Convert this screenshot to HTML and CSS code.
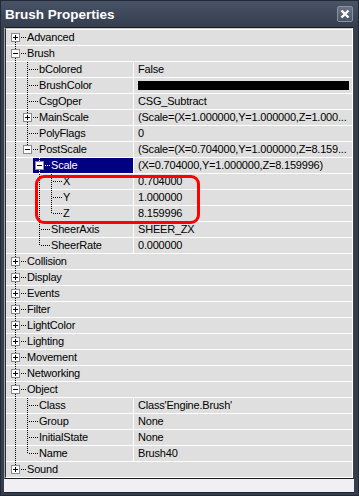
FILE: index.html
```html
<!DOCTYPE html>
<html lang="en">
<head>
    <meta charset="UTF-8">
    <title>Brush Properties</title>
    <link rel="stylesheet" href="styles.css">
</head>
<body>

<div class="window">
    <div class="titlebar">
        <span class="title">Brush Properties</span>
        <span class="close">
            <svg width="10" height="10" viewBox="0 0 10 10"><path d="M1.5 1.5L8.5 8.5M8.5 1.5L1.5 8.5" stroke="#fff" stroke-width="2.4"/></svg>
        </span>
    </div>

    <div class="client">
        <div class="grid">
            <div class="grid-in">

                <div class="row cat">
                    <div class="name"><span class="node"><span class="slot first"><i class="box plus"></i></span><span class="stub"></span><span class="label">Advanced</span></span></div>
                </div>
                <div class="row cat">
                    <div class="name"><span class="node"><span class="slot tee"><i class="box"></i></span><span class="stub"></span><span class="label">Brush</span></span></div>
                </div>
                <div class="row">
                    <div class="name"><span class="slot pipe"></span><span class="node"><span class="slot tee"></span><span class="stub"></span><span class="label">bColored</span></span></div>
                    <div class="value">False</div>
                </div>
                <div class="row">
                    <div class="name"><span class="slot pipe"></span><span class="node"><span class="slot tee"></span><span class="stub"></span><span class="label">BrushColor</span></span></div>
                    <div class="value"><span class="swatch"></span></div>
                </div>
                <div class="row">
                    <div class="name"><span class="slot pipe"></span><span class="node"><span class="slot tee"></span><span class="stub"></span><span class="label">CsgOper</span></span></div>
                    <div class="value">CSG_Subtract</div>
                </div>
                <div class="row">
                    <div class="name"><span class="slot pipe"></span><span class="node"><span class="slot tee"><i class="box plus"></i></span><span class="stub"></span><span class="label">MainScale</span></span></div>
                    <div class="value">(Scale=(X=1.000000,Y=1.000000,Z=1.000...</div>
                </div>
                <div class="row">
                    <div class="name"><span class="slot pipe"></span><span class="node"><span class="slot tee"></span><span class="stub"></span><span class="label">PolyFlags</span></span></div>
                    <div class="value">0</div>
                </div>
                <div class="row">
                    <div class="name"><span class="slot pipe"></span><span class="node"><span class="slot elbow"><i class="box"></i></span><span class="stub"></span><span class="label">PostScale</span></span></div>
                    <div class="value">(Scale=(X=0.704000,Y=1.000000,Z=8.159...</div>
                </div>
                <div class="row sel">
                    <div class="name"><span class="slot pipe"></span><span class="slot"></span><span class="node"><span class="slot tee"><i class="box"></i></span><span class="stub"></span><span class="label">Scale</span></span></div>
                    <div class="value">(X=0.704000,Y=1.000000,Z=8.159996)</div>
                </div>
                <div class="row">
                    <div class="name"><span class="slot pipe"></span><span class="slot"></span><span class="slot pipe"></span><span class="node"><span class="slot tee"></span><span class="stub"></span><span class="label">X</span></span></div>
                    <div class="value">0.704000</div>
                </div>
                <div class="row">
                    <div class="name"><span class="slot pipe"></span><span class="slot"></span><span class="slot pipe"></span><span class="node"><span class="slot tee"></span><span class="stub"></span><span class="label">Y</span></span></div>
                    <div class="value">1.000000</div>
                </div>
                <div class="row">
                    <div class="name"><span class="slot pipe"></span><span class="slot"></span><span class="slot pipe"></span><span class="node"><span class="slot elbow"></span><span class="stub"></span><span class="label">Z</span></span></div>
                    <div class="value">8.159996</div>
                </div>
                <div class="row">
                    <div class="name"><span class="slot pipe"></span><span class="slot"></span><span class="node"><span class="slot tee"></span><span class="stub"></span><span class="label">SheerAxis</span></span></div>
                    <div class="value">SHEER_ZX</div>
                </div>
                <div class="row">
                    <div class="name"><span class="slot pipe"></span><span class="slot"></span><span class="node"><span class="slot elbow"></span><span class="stub"></span><span class="label">SheerRate</span></span></div>
                    <div class="value">0.000000</div>
                </div>
                <div class="row cat">
                    <div class="name"><span class="node"><span class="slot tee"><i class="box plus"></i></span><span class="stub"></span><span class="label">Collision</span></span></div>
                </div>
                <div class="row cat">
                    <div class="name"><span class="node"><span class="slot tee"><i class="box plus"></i></span><span class="stub"></span><span class="label">Display</span></span></div>
                </div>
                <div class="row cat">
                    <div class="name"><span class="node"><span class="slot tee"><i class="box plus"></i></span><span class="stub"></span><span class="label">Events</span></span></div>
                </div>
                <div class="row cat">
                    <div class="name"><span class="node"><span class="slot tee"><i class="box plus"></i></span><span class="stub"></span><span class="label">Filter</span></span></div>
                </div>
                <div class="row cat">
                    <div class="name"><span class="node"><span class="slot tee"><i class="box plus"></i></span><span class="stub"></span><span class="label">LightColor</span></span></div>
                </div>
                <div class="row cat">
                    <div class="name"><span class="node"><span class="slot tee"><i class="box plus"></i></span><span class="stub"></span><span class="label">Lighting</span></span></div>
                </div>
                <div class="row cat">
                    <div class="name"><span class="node"><span class="slot tee"><i class="box plus"></i></span><span class="stub"></span><span class="label">Movement</span></span></div>
                </div>
                <div class="row cat">
                    <div class="name"><span class="node"><span class="slot tee"><i class="box plus"></i></span><span class="stub"></span><span class="label">Networking</span></span></div>
                </div>
                <div class="row cat">
                    <div class="name"><span class="node"><span class="slot tee"><i class="box"></i></span><span class="stub"></span><span class="label">Object</span></span></div>
                </div>
                <div class="row">
                    <div class="name"><span class="slot pipe"></span><span class="node"><span class="slot tee"></span><span class="stub"></span><span class="label">Class</span></span></div>
                    <div class="value">Class'Engine.Brush'</div>
                </div>
                <div class="row">
                    <div class="name"><span class="slot pipe"></span><span class="node"><span class="slot tee"></span><span class="stub"></span><span class="label">Group</span></span></div>
                    <div class="value">None</div>
                </div>
                <div class="row">
                    <div class="name"><span class="slot pipe"></span><span class="node"><span class="slot tee"></span><span class="stub"></span><span class="label">InitialState</span></span></div>
                    <div class="value">None</div>
                </div>
                <div class="row">
                    <div class="name"><span class="slot pipe"></span><span class="node"><span class="slot elbow"></span><span class="stub"></span><span class="label">Name</span></span></div>
                    <div class="value">Brush40</div>
                </div>
                <div class="row cat">
                    <div class="name"><span class="node"><span class="slot elbow"><i class="box plus"></i></span><span class="stub"></span><span class="label">Sound</span></span></div>
                </div>

            </div>
        </div>
    </div>

    <!-- red annotation round X/Y/Z -->
    <div class="mark"></div>
</div>

</body>
</html>
```

FILE: styles.css
```css
body {
    margin: 0;
    width: 359px;
    height: 496px;
    overflow: hidden;
    background: #343e4f;
    font-family: 'Liberation Sans', Arial, sans-serif;
    font-size: 11px;
    color: #000;
}
.window {
    position: relative;
    height: 496px;
    box-sizing: border-box;
    border: 1px solid #222935;
    background: linear-gradient(#485365, #343e4f 26px, #343e4f);
    display: flex;
    flex-direction: column;
}
.titlebar {
    height: 26px;
    flex: none;
    display: flex;
    align-items: center;
    justify-content: space-between;
    padding: 0 5px 0 4px;
}
.title {
    color: #fff;
    font-weight: bold;
    font-size: 13.5px;
    padding-top: 1px;
}
.close {
    width: 14px;
    height: 14px;
    border: 1px solid #8a93a2;
    border-radius: 2px;
    background: linear-gradient(#6c7586, #4b5464);
    display: flex;
    align-items: center;
    justify-content: center;
}
.client {
    flex: 1;
    margin: 0 4px 2px 3px;
    background: #f0f0f4;
    border-bottom: 1px solid #1f2631;
}
.grid {
    border-top: 1px solid #1c1c1c;
    border-left: 1px solid #a0a0a0;
    border-right: 1px solid #404040;
    border-bottom: 1px solid #1c1c1c;
}
.grid-in {
    border-top: 1px solid #c8c8c8;
    border-left: 1px solid #303030;
    border-right: 1px solid #fff;
    border-bottom: 1px solid #fff;
    letter-spacing: -0.2px;
}
.row {
    display: flex;
    height: 15px;
    line-height: 15px;
    border-top: 1px solid #fff;
    background: #dfdfdf;
    white-space: nowrap;
}
.name {
    width: 124px;
    flex: none;
    display: flex;
    padding-left: 3px;
    overflow: hidden;
}
.cat .name {
    flex: 1;
}
.value {
    flex: 1;
    border-left: 1px solid #fff;
    padding: 0 3px 0 4px;
    overflow: hidden;
}
.node {
    display: flex;
    flex: 1;
}
.slot {
    width: 12px;
    height: 15px;
    flex: none;
    display: flex;
    align-items: flex-start;
}
.pipe {
    background: repeating-linear-gradient(#000 0 1px, transparent 1px 2px) 6px 0 / 1px 15px no-repeat;
}
.tee {
    background:
        repeating-linear-gradient(#000 0 1px, transparent 1px 2px) 6px 0 / 1px 15px no-repeat,
        repeating-linear-gradient(90deg, #000 0 1px, transparent 1px 2px) 8px 7px / 4px 1px no-repeat;
}
.elbow {
    background:
        repeating-linear-gradient(#000 0 1px, transparent 1px 2px) 6px 0 / 1px 8px no-repeat,
        repeating-linear-gradient(90deg, #000 0 1px, transparent 1px 2px) 8px 7px / 4px 1px no-repeat;
}
.first {
    background:
        repeating-linear-gradient(#000 0 1px, transparent 1px 2px) 6px 8px / 1px 7px no-repeat,
        repeating-linear-gradient(90deg, #000 0 1px, transparent 1px 2px) 8px 7px / 4px 1px no-repeat;
}
.stub {
    width: 6px;
    flex: none;
    background: repeating-linear-gradient(90deg, #000 0 1px, transparent 1px 2px) 0 7px / 6px 1px no-repeat;
}
.label {
    padding-right: 2px;
}
.sel .node {
    background-color: #000080;
    color: #fff;
}
.sel .node .tee {
    background:
        repeating-linear-gradient(#fff 0 1px, transparent 1px 2px) 6px 0 / 1px 15px no-repeat,
        repeating-linear-gradient(90deg, #fff 0 1px, transparent 1px 2px) 8px 7px / 4px 1px no-repeat;
}
.sel .node .stub {
    background: repeating-linear-gradient(90deg, #fff 0 1px, transparent 1px 2px) 0 7px / 6px 1px no-repeat;
}
.box {
    position: relative;
    width: 7px;
    height: 7px;
    margin: 3px 0 0 2px;
    border: 1px solid #8a8a8a;
    background: #fff;
}
.box::before,
.plus::after {
    content: '';
    position: absolute;
    background: #000;
}
.box::before {
    left: 1px;
    top: 3px;
    width: 5px;
    height: 1px;
}
.plus::after {
    left: 3px;
    top: 1px;
    width: 1px;
    height: 5px;
}
.swatch {
    display: block;
    height: 9px;
    margin-top: 3px;
    background: #000;
}
.mark {
    position: absolute;
    left: 34px;
    top: 174px;
    width: 165px;
    height: 49px;
    box-sizing: border-box;
    border: 3px solid #ff0000;
    border-radius: 9px;
}
```
